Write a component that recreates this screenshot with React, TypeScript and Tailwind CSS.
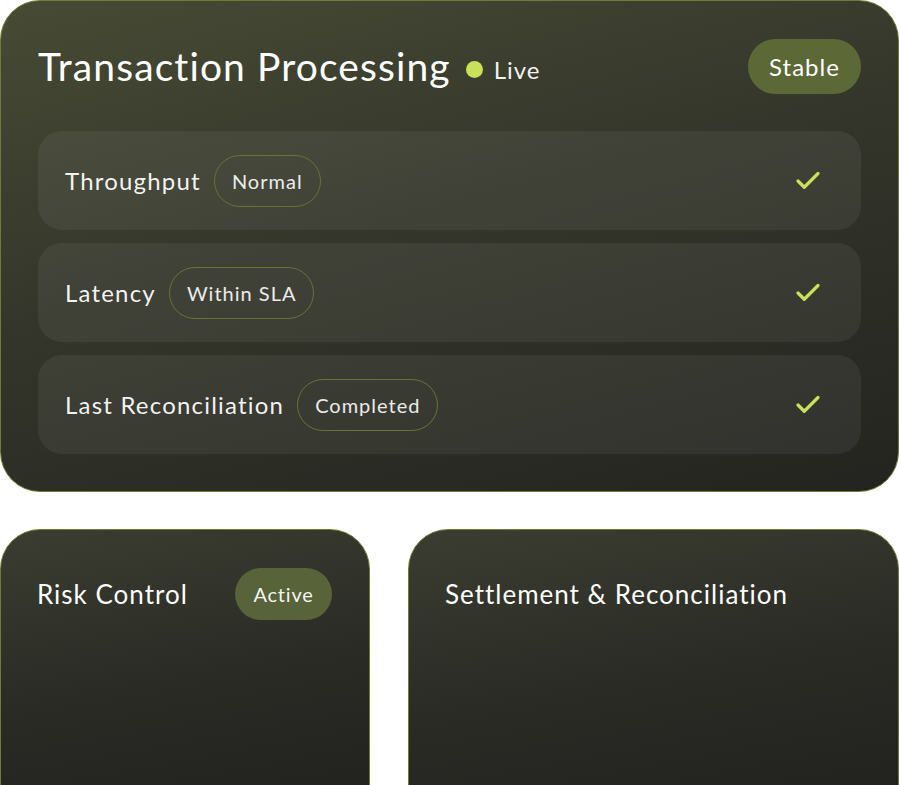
import { Check } from 'lucide-react';

const rows = [
  { label: 'Throughput', status: 'Normal' },
  { label: 'Latency', status: 'Within SLA' },
  { label: 'Last Reconciliation', status: 'Completed' },
];

export default function App() {
  return (
    <div
      className="w-[899px] h-[785px] overflow-hidden bg-white text-white"
      style={{ fontFamily: 'Lato, "Open Sans", sans-serif' }}
    >
      {/* Main card */}
      <div className="rounded-[40px] border border-[#6f7d34] bg-[linear-gradient(165deg,#474b34_0%,#34362b_45%,#23241f_100%)] px-[37px] pt-[38px] pb-[37px]">
        <div className="flex h-[55px] items-center justify-between">
          <div className="flex items-center">
            <h1 className="text-[39px] leading-none tracking-[1.1px] text-white">Transaction Processing</h1>
            <span className="ml-[15px] mt-[6px] size-[17px] rounded-full bg-[#c8e05a]"></span>
            <span className="ml-[11px] mt-[6px] text-[24px] leading-none tracking-[1px] text-white/95">Live</span>
          </div>
          <span className="flex h-[55px] w-[113px] items-center justify-center rounded-full bg-[#5d6837] text-[24px] tracking-[1px] text-white">
            Stable
          </span>
        </div>

        <div className="mt-[37px] flex flex-col gap-[13px]">
          {rows.map((row) => (
            <div
              key={row.label}
              className="flex h-[99px] items-center justify-between rounded-[24px] bg-white/[0.06] pl-[27px] pr-[38px]"
            >
              <div className="flex items-center gap-[13px]">
                <span className="text-[24px] tracking-[1.2px] text-white/95">{row.label}</span>
                <span className="flex h-[52px] items-center rounded-full border border-[#66733a] px-[17px] text-[20px] tracking-[1px] text-white/90">
                  {row.status}
                </span>
              </div>
              <Check className="size-[30px] text-[#c8e05a]" strokeWidth={2.6} />
            </div>
          ))}
        </div>
      </div>

      {/* Bottom cards */}
      <div className="mt-[37px] flex gap-[38px]">
        <div className="h-[300px] w-[370px] rounded-[40px] border border-[#6f7d34] bg-[linear-gradient(170deg,#3b3d31_0%,#2a2b25_50%,#20211d_100%)] pl-[36px] pr-[37px] pt-[38px]">
          <div className="flex h-[52px] items-center justify-between">
            <span className="text-[26px] tracking-[1px] text-white">Risk Control</span>
            <span className="flex h-[52px] w-[97px] items-center justify-center rounded-full bg-[#59633a] text-[20px] tracking-[0.8px] text-white/95">
              Active
            </span>
          </div>
        </div>
        <div className="h-[300px] flex-1 rounded-[40px] border border-[#6f7d34] bg-[linear-gradient(170deg,#3b3d31_0%,#2a2b25_50%,#20211d_100%)] pl-[36px] pt-[38px]">
          <div className="flex h-[52px] items-center">
            <span className="text-[26px] tracking-[1px] text-white">Settlement &amp; Reconciliation</span>
          </div>
        </div>
      </div>
    </div>
  );
}
